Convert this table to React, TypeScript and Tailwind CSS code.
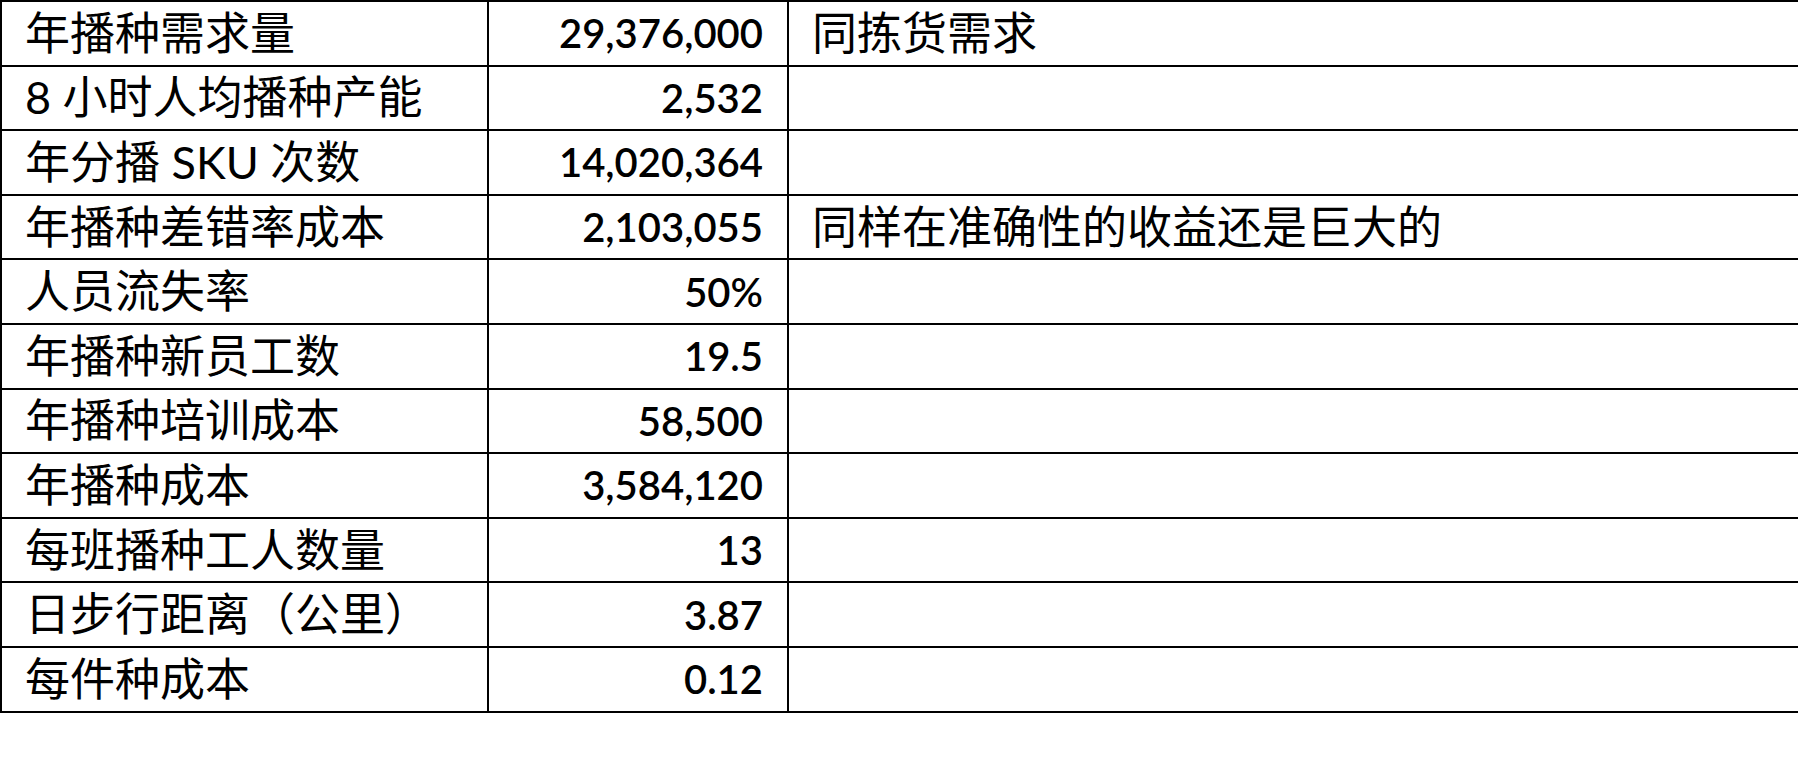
import React from "react";

const rows: [string, string, string][] = [
  ["年播种需求量", "29,376,000", "同拣货需求"],
  ["8 小时人均播种产能", "2,532", ""],
  ["年分播 SKU 次数", "14,020,364", ""],
  ["年播种差错率成本", "2,103,055", "同样在准确性的收益还是巨大的"],
  ["人员流失率", "50%", ""],
  ["年播种新员工数", "19.5", ""],
  ["年播种培训成本", "58,500", ""],
  ["年播种成本", "3,584,120", ""],
  ["每班播种工人数量", "13", ""],
  ["日步行距离（公里）", "3.87", ""],
  ["每件种成本", "0.12", ""],
];

export default function App() {
  return (
    <div
      className="w-[1798px] h-[774px] bg-white text-black overflow-hidden"
      style={{ fontFamily: "Lato, 'Noto Sans CJK SC', sans-serif" }}
    >
      <div className="border-t-2 border-l-2 border-black w-[1798px]">
        {rows.map(([a, b, c], i) => (
          <div key={i} className="flex h-[64.6px] border-b-2 border-black">
            <div className="w-[487px] shrink-0 border-r-2 border-black flex items-center pl-[23px] text-[45px] leading-none whitespace-nowrap">
              {a}
            </div>
            <div className="w-[300px] shrink-0 border-r-2 border-black flex items-center justify-end pr-[24px] text-[40px] font-semibold leading-none whitespace-nowrap">
              {b}
            </div>
            <div className="flex-1 flex items-center pl-[23px] text-[45px] leading-none whitespace-nowrap">
              {c}
            </div>
          </div>
        ))}
      </div>
    </div>
  );
}
